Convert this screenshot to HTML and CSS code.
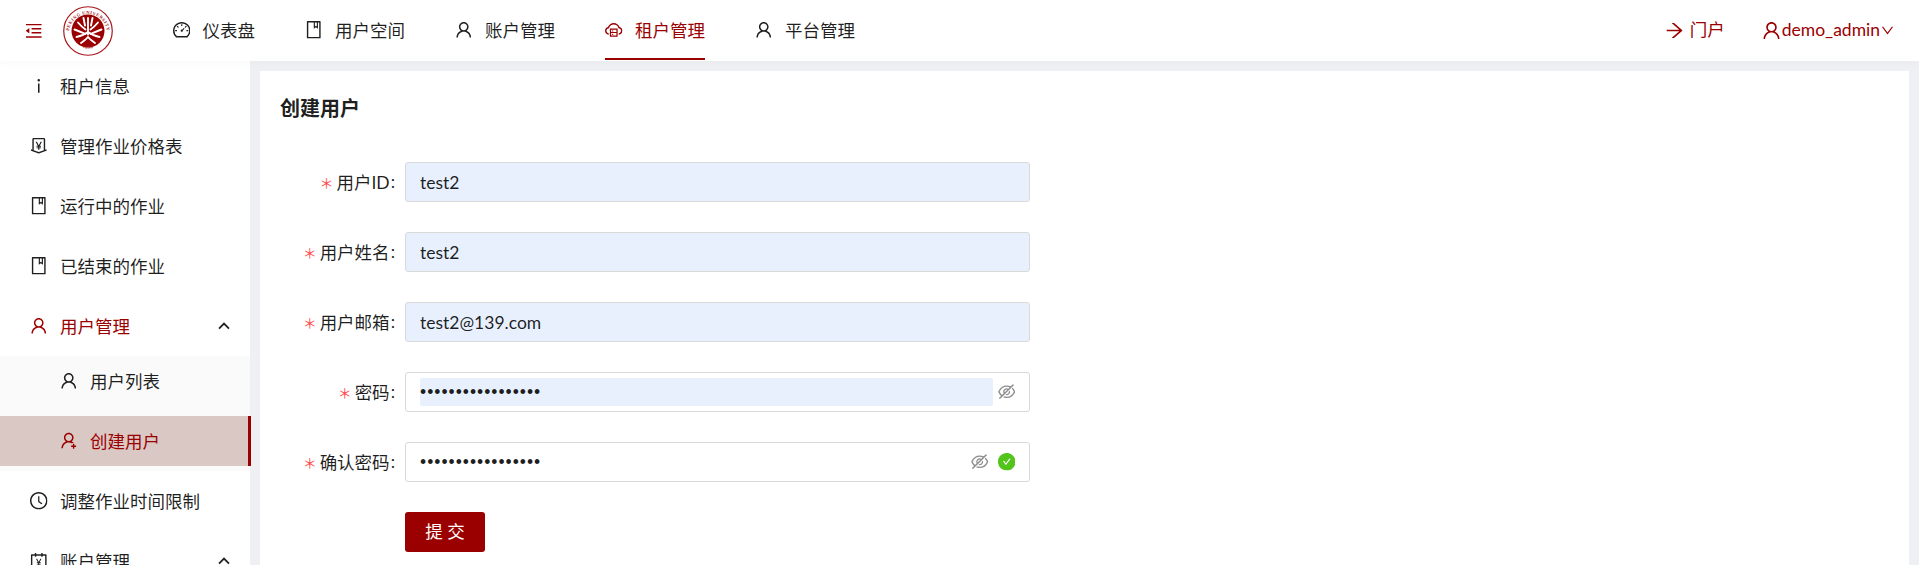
FILE: index.html
```html
<!DOCTYPE html>
<html lang="zh-CN">
<head>
<meta charset="utf-8">
<title>创建用户</title>
<link rel="stylesheet" href="styles.css">
</head>
<body>
<svg class="sprite" xmlns="http://www.w3.org/2000/svg" aria-hidden="true">
  <symbol id="i-fold" viewBox="64 64 896 896"><path d="M408 442h480c4.4 0 8-3.6 8-8v-56c0-4.4-3.6-8-8-8H408c-4.4 0-8 3.6-8 8v56c0 4.4 3.6 8 8 8zm-8 204c0 4.4 3.6 8 8 8h480c4.4 0 8-3.6 8-8v-56c0-4.4-3.6-8-8-8H408c-4.4 0-8 3.6-8 8v56zm504-486H120c-4.4 0-8 3.6-8 8v56c0 4.4 3.6 8 8 8h784c4.4 0 8-3.6 8-8v-56c0-4.4-3.6-8-8-8zm0 632H120c-4.4 0-8 3.6-8 8v56c0 4.4 3.6 8 8 8h784c4.4 0 8-3.6 8-8v-56c0-4.4-3.6-8-8-8zM115.4 518.9L271.7 642c5.8 4.6 14.4.5 14.4-6.9V388.9c0-7.4-8.5-11.5-14.4-6.9L115.4 505.1a8.74 8.74 0 000 13.8z"/></symbol>
  <symbol id="i-dash" viewBox="64 64 896 896"><path d="M924.8 385.6a446.7 446.7 0 00-96-142.4 446.7 446.7 0 00-142.4-96C631.1 123.8 572.5 112 512 112s-119.1 11.8-174.4 35.2a446.7 446.7 0 00-142.4 96 446.7 446.7 0 00-96 142.4C75.8 440.9 64 499.5 64 560c0 132.7 58.3 257.7 159.9 343.1l1.7 1.4c5.8 4.8 13.1 7.5 20.6 7.5h531.7c7.5 0 14.8-2.7 20.6-7.5l1.7-1.4C901.7 817.7 960 692.7 960 560c0-60.5-11.9-119.1-35.2-174.4zM761.4 836H262.6A371.12 371.12 0 01140 560c0-99.4 38.7-192.8 109-263 70.3-70.3 163.7-109 263-109 99.4 0 192.8 38.7 263 109 70.3 70.3 109 163.7 109 263 0 105.6-44.5 205.5-122.6 276zM623.5 421.5a8.03 8.03 0 00-11.3 0L527.7 506c-18.7-5-39.4-.2-54.1 14.5a55.95 55.95 0 000 79.2 55.95 55.95 0 0079.2 0 55.87 55.87 0 0014.5-54.1l84.5-84.5c3.1-3.1 3.1-8.2 0-11.3l-28.3-28.3zM490 320h44c4.4 0 8-3.6 8-8v-80c0-4.4-3.6-8-8-8h-44c-4.4 0-8 3.6-8 8v80c0 4.4 3.6 8 8 8zm260 218v44c0 4.4 3.6 8 8 8h80c4.4 0 8-3.6 8-8v-44c0-4.4-3.6-8-8-8h-80c-4.4 0-8 3.6-8 8zm12.7-197.2l-31.1-31.1a8.03 8.03 0 00-11.3 0l-56.6 56.6a8.03 8.03 0 000 11.3l31.1 31.1c3.1 3.1 8.2 3.1 11.3 0l56.6-56.6c3.1-3.1 3.1-8.2 0-11.3zm-458.6-31.1a8.03 8.03 0 00-11.3 0l-31.1 31.1a8.03 8.03 0 000 11.3l56.6 56.6c3.1 3.1 8.2 3.1 11.3 0l31.1-31.1c3.1-3.1 3.1-8.2 0-11.3l-56.6-56.6zM262 530h-80c-4.4 0-8 3.6-8 8v44c0 4.4 3.6 8 8 8h80c4.4 0 8-3.6 8-8v-44c0-4.4-3.6-8-8-8z"/></symbol>
  <symbol id="i-book" viewBox="64 64 896 896"><path d="M832 64H192c-17.7 0-32 14.3-32 32v832c0 17.7 14.3 32 32 32h640c17.7 0 32-14.3 32-32V96c0-17.7-14.3-32-32-32zm-260 72h96v209.9L621.5 312 572 347.4V136zm220 752H232V136h280v296.9c0 3.3 1 6.6 3 9.3a15.9 15.9 0 0022.3 3.7l83.8-59.9 81.4 59.4c2.7 2 6 3.1 9.4 3.1 8.8 0 16-7.2 16-16V136h64v752z"/></symbol>
  <symbol id="i-user" viewBox="64 64 896 896"><path d="M858.5 763.6a374 374 0 00-80.6-119.5 375.63 375.63 0 00-119.5-80.6c-.4-.2-.8-.3-1.2-.5C719.5 518 760 444.7 760 362c0-137-111-248-248-248S264 225 264 362c0 82.7 40.5 156 102.8 201.1-.4.2-.8.3-1.2.5-44.8 18.9-85 46-119.5 80.6a375.63 375.63 0 00-80.6 119.5A371.7 371.7 0 00136 901.8a8 8 0 008 8.2h60c4.4 0 7.9-3.5 8-7.8 2-77.2 33-149.5 87.8-204.3 56.7-56.7 132-87.9 212.2-87.9s155.5 31.2 212.2 87.9C779 752.7 810 825 812 902.2c.1 4.4 3.6 7.8 8 7.8h60a8 8 0 008-8.2c-1-47.8-10.9-94.3-29.5-138.2zM512 534c-45.9 0-89.1-17.9-121.6-50.4S340 407.9 340 362c0-45.9 17.9-89.1 50.4-121.6S466.1 190 512 190s89.1 17.9 121.6 50.4S684 316.1 684 362c0 45.9-17.9 89.1-50.4 121.6S557.9 534 512 534z"/></symbol>
  <symbol id="i-useradd" viewBox="64 64 896 896"><path d="M678.3 642.4c24.5-13.2 52.5-20.7 82.3-20.7h.1c3.1 0 4.5-3.6 2.2-5.6a371.67 371.67 0 00-103.7-65.8c-.4-.2-.8-.3-1.2-.5C719.2 505 759.6 431.7 759.6 349c0-137-110.8-248-247.5-248S264.7 212 264.7 349c0 82.7 40.4 156 102.6 201.1-.4.2-.8.3-1.2.5-44.7 18.9-84.8 46-119.3 80.6a373.42 373.42 0 00-80.4 119.5A373.6 373.6 0 00136.7 888.8a8 8 0 008 8.2h59.9c4.3 0 7.9-3.5 8-7.8 2-77.2 32.9-149.5 87.6-204.3C356 628.2 431.2 597 511.2 597c56.7 0 111.1 15.7 158 45.1a8.1 8.1 0 009.1.3zM512.1 521c-45.8 0-88.9-17.9-121.4-50.4A171.2 171.2 0 01340.5 349c0-45.9 17.9-89.1 50.3-121.6S466.3 177 512.1 177s88.9 17.9 121.4 50.4A171.2 171.2 0 01683.9 349c0 45.9-17.9 89.1-50.3 121.6C601.1 503.1 558 521 512.1 521zM880 759h-84v-84c0-4.4-3.6-8-8-8h-56c-4.4 0-8 3.6-8 8v84h-84c-4.4 0-8 3.6-8 8v56c0 4.4 3.6 8 8 8h84v84c0 4.4 3.6 8 8 8h56c4.4 0 8-3.6 8-8v-84h84c4.4 0 8-3.6 8-8v-56c0-4.4-3.6-8-8-8z"/></symbol>
  <symbol id="i-cloud" viewBox="64 64 896 896"><path d="M704 446H320c-4.4 0-8 3.6-8 8v402c0 4.4 3.6 8 8 8h384c4.4 0 8-3.6 8-8V454c0-4.4-3.6-8-8-8zm-328 64h272v117H376V510zm272 290H376V683h272v117z"/><path d="M424 748a32 32 0 1064 0 32 32 0 10-64 0zm0-178a32 32 0 1064 0 32 32 0 10-64 0z"/><path d="M811.4 368.9C765.6 248 648.9 162 512.2 162S258.8 247.9 213 368.8C126.9 391.5 63.5 470.2 64 563.6 64.6 668 145.6 752.9 247.6 762c4.7.4 8.7-3.3 8.7-8v-60.4c0-4-3-7.4-7-7.9-27-3.4-52.5-15.2-72.1-34.5-24-23.5-37.2-55.1-37.2-88.6 0-28 9.1-54.4 26.2-76.4 16.7-21.4 40.2-36.9 66.1-43.7l37.9-10 13.9-36.7c8.6-22.8 20.6-44.2 35.7-63.5 14.9-19.2 32.6-36 52.4-50 41.1-28.9 89.5-44.2 140-44.2s98.9 15.3 140 44.3c19.9 14 37.5 30.8 52.4 50 15.1 19.3 27.1 40.7 35.7 63.5l13.8 36.6 37.8 10c54.2 14.4 92.1 63.7 92.1 120 0 33.6-13.2 65.1-37.2 88.6-19.5 19.2-44.9 31.1-71.9 34.5-4 .5-6.9 3.9-6.9 7.9V754c0 4.7 4.1 8.4 8.8 8 101.7-9.2 182.5-94 183.2-198.2.6-93.4-62.7-172.1-148.6-194.9z"/></symbol>
  <symbol id="i-arrow" viewBox="64 64 896 896"><path d="M869 487.8L491.2 159.9c-2.9-2.5-6.6-3.9-10.5-3.9h-88.5c-7.4 0-10.8 9.2-5.2 14l350.2 304H152c-4.4 0-8 3.6-8 8v60c0 4.4 3.6 8 8 8h585.1L386.9 854c-5.6 4.9-2.2 14 5.2 14h91.5c1.9 0 3.8-.7 5.2-2L869 536.2a32.07 32.07 0 000-48.4z"/></symbol>
  <symbol id="i-down" viewBox="64 64 896 896"><path d="M884 256h-75c-5.1 0-9.9 2.5-12.9 6.6L512 654.2 227.9 262.6c-3-4.1-7.8-6.6-12.9-6.6h-75c-6.5 0-10.3 7.4-6.5 12.7l352.6 486.1c12.8 17.6 39 17.6 51.7 0l352.6-486.1c3.9-5.3.1-12.7-6.4-12.7z"/></symbol>
  <symbol id="i-up" viewBox="0 0 12 12"><polyline points="1,8.6 6,3.6 11,8.6" fill="none" stroke="currentColor" stroke-width="1.8"/></symbol>
  <symbol id="i-info" viewBox="64 64 896 896"><path d="M448 224a64 64 0 10128 0 64 64 0 10-128 0zm96 168h-64c-4.4 0-8 3.6-8 8v464c0 4.4 3.6 8 8 8h64c4.4 0 8-3.6 8-8V400c0-4.4-3.6-8-8-8z"/></symbol>
  <symbol id="i-money" viewBox="64 64 896 896"><path d="M911.5 700.7a8 8 0 00-10.3-4.8L840 718.2V180c0-37.6-30.4-68-68-68H252c-37.6 0-68 30.4-68 68v538.2l-61.3-22.3c-.9-.3-1.8-.5-2.7-.5-4.4 0-8 3.6-8 8V763c0 3.3 2.1 6.3 5.3 7.5L501 910.1c7.1 2.6 14.8 2.6 21.9 0l383.8-139.5c3.2-1.2 5.3-4.2 5.3-7.5v-59.6c0-1-.2-1.9-.5-2.8zM512 837.5l-256-93.1V184h512v560.4l-256 93.1zM660.6 312h-54.5c-3 0-5.8 1.7-7.1 4.4l-84.7 168.8H511l-84.7-168.8a8 8 0 00-7.1-4.4h-55.7c-1.3 0-2.6.3-3.8 1-3.9 2.1-5.3 7-3.2 10.8l103.9 191.6h-57c-4.4 0-8 3.6-8 8v27.1c0 4.4 3.6 8 8 8h76v39h-76c-4.4 0-8 3.6-8 8v27.1c0 4.4 3.6 8 8 8h76V704c0 4.4 3.6 8 8 8h49.9c4.4 0 8-3.6 8-8v-63.5h76.3c4.4 0 8-3.6 8-8v-27.1c0-4.4-3.6-8-8-8h-76.3v-39h76.3c4.4 0 8-3.6 8-8v-27.1c0-4.4-3.6-8-8-8H564l103.7-191.6c.6-1.2 1-2.5 1-3.8-.1-4.3-3.7-7.9-8.1-7.9z"/></symbol>
  <symbol id="i-clock" viewBox="64 64 896 896"><path d="M512 64C264.6 64 64 264.6 64 512s200.6 448 448 448 448-200.6 448-448S759.4 64 512 64zm0 820c-205.4 0-372-166.6-372-372s166.6-372 372-372 372 166.6 372 372-166.6 372-372 372z"/><path d="M686.7 638.6L544.1 535.5V288c0-4.4-3.6-8-8-8H488c-4.4 0-8 3.6-8 8v275.4c0 2.6 1.2 5 3.3 6.5l165.4 120.6c3.6 2.6 8.6 1.8 11.2-1.7l28.6-39c2.6-3.7 1.8-8.7-1.8-11.2z"/></symbol>
  <symbol id="i-account" viewBox="64 64 896 896"><path d="M880 184H712v-64c0-4.4-3.6-8-8-8h-56c-4.4 0-8 3.6-8 8v64H384v-64c0-4.4-3.6-8-8-8h-56c-4.4 0-8 3.6-8 8v64H144c-17.7 0-32 14.3-32 32v664c0 17.7 14.3 32 32 32h736c17.7 0 32-14.3 32-32V216c0-17.7-14.3-32-32-32zm-40 656H184V256h128v48c0 4.4 3.6 8 8 8h56c4.4 0 8-3.6 8-8v-48h256v48c0 4.4 3.6 8 8 8h56c4.4 0 8-3.6 8-8v-48h128v584zM639.5 414h-45c-3 0-5.8 1.7-7.1 4.4L514 563.8h-2.8l-73.4-145.4a8 8 0 00-7.1-4.4h-46c-1.3 0-2.7.3-3.8 1-3.9 2.1-5.3 7-3.2 10.8l89.3 164h-48.6c-4.4 0-8 3.6-8 8v21.3c0 4.4 3.6 8 8 8h65.1v33.7h-65.1c-4.4 0-8 3.6-8 8v21.3c0 4.4 3.6 8 8 8h65.1V752c0 4.4 3.6 8 8 8h41.3c4.4 0 8-3.6 8-8v-51.8h65.4c4.4 0 8-3.6 8-8v-21.3c0-4.4-3.6-8-8-8h-65.4v-33.7h65.4c4.4 0 8-3.6 8-8v-21.3c0-4.4-3.6-8-8-8h-49.1l89.3-164.1c.6-1.2 1-2.5 1-3.8.1-4.4-3.4-8-7.9-8z"/></symbol>
  <symbol id="i-eyeoff" viewBox="64 64 896 896"><path d="M942.2 486.2Q889.47 375.11 816.7 305l-50.88 50.88C807.31 395.53 843.45 447.4 874.7 512 791.5 684.2 673.4 766 512 766q-72.67 0-133.87-22.38L323 798.75Q408 838 512 838q288.3 0 430.2-300.3a60.29 60.29 0 000-51.5zm-63.57-320.64L836 122.88a8 8 0 00-11.32 0L715.31 232.2Q624.86 186 512 186q-288.3 0-430.2 300.3a60.3 60.3 0 000 51.5q56.69 119.4 136.5 191.41L112.48 835a8 8 0 000 11.31L155.17 889a8 8 0 0011.31 0l712.15-712.12a8 8 0 000-11.32zM149.3 512C232.6 339.8 350.7 258 512 258c54.54 0 104.13 9.36 149.12 28.39l-70.3 70.3a176 176 0 00-238.13 238.13l-83.42 83.42C223.1 637.49 183.3 582.28 149.3 512zm246.7 0a112.11 112.11 0 01146.2-106.69L401.31 546.2A112 112 0 01396 512z"/><path d="M508 624c-3.46 0-6.87-.16-10.25-.47l-52.82 52.82a176.09 176.09 0 00227.42-227.42l-52.82 52.82c.31 3.38.47 6.79.47 10.25a111.94 111.94 0 01-112 112z"/></symbol>
  <symbol id="i-check" viewBox="64 64 896 896"><path d="M512 64C264.6 64 64 264.6 64 512s200.6 448 448 448 448-200.6 448-448S759.4 64 512 64zm193.5 301.7l-210.6 292a31.8 31.8 0 01-51.7 0L318.5 484.9c-3.8-5.3 0-12.7 6.5-12.7h46.9c10.2 0 19.9 4.9 25.9 13.3l71.2 98.8 157.2-218c6-8.3 15.6-13.3 25.9-13.3H699c6.5 0 10.3 7.4 6.5 12.7z"/></symbol>
</svg>

<header class="topbar">
  <svg class="icon trigger"><use href="#i-fold"/></svg>
  <svg class="logo" viewBox="0 0 100 100" role="img" aria-label="Peking University">
    <defs>
      <path id="ring-top" d="M12 54a38 38 0 1 1 76 0"/>
      <path id="ring-bottom" d="M16 60a35.5 35.5 0 0 0 68 0"/>
    </defs>
    <circle cx="50" cy="50" r="48.5" fill="#fff" stroke="#a5171c" stroke-width="2.4"/>
    <circle cx="50" cy="50" r="33" fill="#9b0000"/>
    <text class="logo-text"><textPath href="#ring-top" startOffset="50%" text-anchor="middle">PEKING UNIVERSITY</textPath></text>
    <text class="logo-text"><textPath href="#ring-bottom" startOffset="50%" text-anchor="middle">1898</textPath></text>
    <g class="logo-tree">
      <path d="M50 24V57"/>
      <path d="M41 24L44 39 M59 24L56 39"/>
      <path d="M30 33C35 39 39 43 45 47 M70 33C65 39 61 43 55 47"/>
      <path d="M23 47C32 50 38 53 45 56 M77 47C68 50 62 53 55 56"/>
      <path d="M27 62C35 60 42 58 50 52C58 58 65 60 73 62"/>
      <path d="M36 74C41 70 46 67 50 62C54 67 59 70 64 74"/>
    </g>
  </svg>
  <nav class="topnav">
    <a class="topnav-item"><svg class="icon"><use href="#i-dash"/></svg><span class="lift">仪表盘</span></a>
    <a class="topnav-item"><svg class="icon"><use href="#i-book"/></svg><span class="lift">用户空间</span></a>
    <a class="topnav-item"><svg class="icon"><use href="#i-user"/></svg><span class="lift">账户管理</span></a>
    <a class="topnav-item is-active"><svg class="icon"><use href="#i-cloud"/></svg><span class="lift">租户管理</span></a>
    <a class="topnav-item"><svg class="icon"><use href="#i-user"/></svg><span class="lift">平台管理</span></a>
  </nav>
  <div class="topbar-right">
    <a class="portal"><svg class="icon icon-lg"><use href="#i-arrow"/></svg><span>门户</span></a>
    <a class="account"><svg class="icon icon-lg"><use href="#i-user"/></svg><span>demo_admin</span><svg class="icon icon-sm"><use href="#i-down"/></svg></a>
  </div>
</header>

<div class="shell">
  <aside class="sidebar">
    <ul class="menu">
      <li class="menu-row"><svg class="icon"><use href="#i-info"/></svg><span class="lift">租户信息</span></li>
      <li class="menu-row"><svg class="icon"><use href="#i-money"/></svg><span class="lift">管理作业价格表</span></li>
      <li class="menu-row"><svg class="icon"><use href="#i-book"/></svg><span class="lift">运行中的作业</span></li>
      <li class="menu-row"><svg class="icon"><use href="#i-book"/></svg><span class="lift">已结束的作业</span></li>
      <li class="menu-row is-open"><svg class="icon"><use href="#i-user"/></svg><span class="lift">用户管理</span><svg class="caret"><use href="#i-up"/></svg></li>
      <li class="submenu">
        <ul class="submenu-list">
          <li class="menu-row sub-row"><svg class="icon"><use href="#i-user"/></svg><span class="lift">用户列表</span></li>
          <li class="menu-row sub-row is-selected"><svg class="icon"><use href="#i-useradd"/></svg><span class="lift">创建用户</span></li>
        </ul>
      </li>
      <li class="menu-row"><svg class="icon"><use href="#i-clock"/></svg><span class="lift">调整作业时间限制</span></li>
      <li class="menu-row"><svg class="icon"><use href="#i-account"/></svg><span class="lift">账户管理</span><svg class="caret"><use href="#i-up"/></svg></li>
    </ul>
  </aside>

  <main class="content">
    <section class="card">
      <h1 class="card-title">创建用户</h1>
      <form class="form">
        <div class="form-row">
          <label class="form-label"><i class="req">＊</i><span class="lift">用户ID</span><b class="colon">:</b></label>
          <div class="field is-autofill"><input class="field-input" value="test2"></div>
        </div>
        <div class="form-row">
          <label class="form-label"><i class="req">＊</i><span class="lift">用户姓名</span><b class="colon">:</b></label>
          <div class="field is-autofill"><input class="field-input" value="test2"></div>
        </div>
        <div class="form-row">
          <label class="form-label"><i class="req">＊</i><span class="lift">用户邮箱</span><b class="colon">:</b></label>
          <div class="field is-autofill"><input class="field-input" value="test2@139.com"></div>
        </div>
        <div class="form-row">
          <label class="form-label"><i class="req">＊</i><span class="lift">密码</span><b class="colon">:</b></label>
          <div class="field">
            <input class="field-input is-secret is-inner-fill" type="password" value="aaaaaaaaaaaaaaaaa">
            <svg class="icon eye"><use href="#i-eyeoff"/></svg>
          </div>
        </div>
        <div class="form-row">
          <label class="form-label"><i class="req">＊</i><span class="lift">确认密码</span><b class="colon">:</b></label>
          <div class="field">
            <input class="field-input is-secret" type="password" value="aaaaaaaaaaaaaaaaa">
            <svg class="icon eye"><use href="#i-eyeoff"/></svg>
            <svg class="icon ok"><use href="#i-check"/></svg>
          </div>
        </div>
        <div class="form-row">
          <span class="form-label"></span>
          <button class="submit" type="button">提 交</button>
        </div>
      </form>
    </section>
  </main>
</div>
</body>
</html>
```

FILE: styles.css
```css
* { box-sizing: border-box; }
html, body { height: 100%; }
body {
  margin: 0;
  overflow: hidden;
  background: #eff0f4;
  color: rgba(0, 0, 0, 0.88);
  font: 17.5px/1.5 Lato, "Noto Sans CJK SC", sans-serif;
}
ul { list-style: none; margin: 0; padding: 0; }
.sprite { display: none; }

.icon { width: 17.5px; height: 17.5px; fill: currentColor; flex: none; }
.icon-lg { width: 19px; height: 19px; }
.icon-sm { width: 13px; height: 13px; }
.lift { padding-top: 2px; }

/* top bar */
.topbar {
  position: relative;
  z-index: 2;
  display: flex;
  align-items: center;
  height: 61px;
  padding: 0 25px;
  background: #fff;
  box-shadow: 0 4px 8px rgba(0, 0, 0, 0.02);
}
.trigger { color: #9b0000; }
.logo { width: 50px; height: 50px; margin-left: 20px; flex: none; }
.logo-text { font: 700 9px "Liberation Serif", serif; letter-spacing: 1px; fill: #a5171c; }
.logo-tree { fill: none; stroke: #fff; stroke-width: 3.8; stroke-linecap: round; }
.topnav { display: flex; gap: 50px; margin-left: 60px; height: 100%; }
.topnav-item {
  display: flex;
  align-items: center;
  gap: 12.5px;
  height: 60px;
  padding-top: 2px;
  border-bottom: 2px solid transparent;
}
.topnav-item.is-active { color: #9b0000; border-bottom-color: #9b0000; }
.topbar-right { display: flex; align-items: center; gap: 37px; margin-left: auto; color: #9b0000; }
.portal, .account { display: flex; align-items: center; }
.portal { gap: 6px; }
.account { gap: 1px; }

/* layout */
.shell { display: flex; height: calc(100% - 61px); }
.sidebar { position: relative; z-index: 1; width: 250px; flex: none; background: #fff; }
.menu { display: flex; flex-direction: column; gap: 10px; }
.menu-row {
  display: flex;
  align-items: center;
  gap: 12.5px;
  flex: none;
  height: 50px;
  padding-left: 30px;
  padding-right: 20px;
}
.menu-row.is-open { color: #9b0000; }
.caret { width: 12px; height: 12px; margin-left: auto; color: rgba(0, 0, 0, 0.88); flex: none; }
.submenu { margin: -5px 0; padding: 0 0 5px; background: #fafafa; }
.submenu-list { display: flex; flex-direction: column; gap: 10px; }
.sub-row { padding-left: 60px; }
.sub-row.is-selected {
  width: 251px;
  background: #dac8c4;
  color: #9b0000;
  border-right: 3px solid #9b0000;
}

/* content */
.content { flex: 1; padding: 10px 10px 0; min-width: 0; }
.card { height: 100%; padding: 24px 20px 0; background: #fff; }
.card-title { margin: 0; font-size: 20px; line-height: 27px; font-weight: 600; }
.form { display: flex; flex-direction: column; gap: 30px; margin-top: 40px; }
.form-row { display: flex; align-items: center; height: 40px; }
.form-label { display: flex; align-items: center; justify-content: flex-end; width: 125px; flex: none; }
.req { margin-right: 3px; color: #ff4d4f; font: normal 14px/1 "Noto Sans CJK SC", sans-serif; }
.colon { margin: 0 10px 0 1px; font-weight: 400; }
.field {
  display: flex;
  align-items: center;
  gap: 8px;
  width: 625px;
  height: 40px;
  padding: 0 14px;
  background: #fff;
  border: 1px solid #d9d9d9;
  border-radius: 3px;
}
.field.is-autofill { background: #e8f0fe; }
.field-input {
  flex: 1;
  min-width: 0;
  height: 28px;
  padding: 0;
  border: 0;
  outline: 0;
  background: transparent;
  color: inherit;
  font: inherit;
}
.field-input.is-secret { font-family: "Liberation Sans", sans-serif; letter-spacing: 1px; }
.field-input.is-inner-fill { background: #e8f0fe; border-radius: 2px; }
.eye { margin-left: -3px; color: rgba(0, 0, 0, 0.45); }
.ok { margin-left: 1px; color: #52c41a; }
.submit {
  width: 80px;
  height: 40px;
  padding: 0;
  border: 0;
  border-radius: 3px;
  background: #9b0000;
  color: #fff;
  font: inherit;
}
```
